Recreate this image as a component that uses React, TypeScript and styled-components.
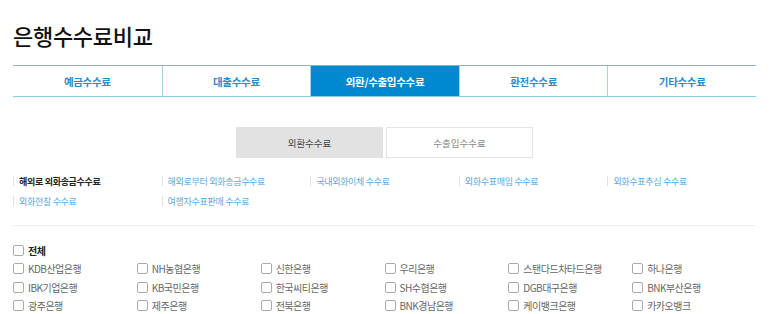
import React from "react";
import { useState } from "react";
import styled, { createGlobalStyle } from "styled-components";

const GlobalStyle = createGlobalStyle`
  body {
    margin: 0;
    background: #fff;
    font-family: "Noto Sans CJK KR", "Noto Sans", sans-serif;
  }
`;

const Page = styled.div`
  width: 743px;
  padding: 0 17px 0 13px;
`;

const Title = styled.h1`
  margin: 0;
  padding-top: 22px;
  height: 65px;
  box-sizing: border-box;
  font-size: 22px;
  line-height: 26px;
  font-weight: 500;
  color: #111;
  letter-spacing: -0.3px;
`;

const TabBar = styled.div`
  display: grid;
  grid-template-columns: repeat(5, 1fr);
  border-top: 1px solid #98afc6;
  border-bottom: 1px solid #8ecbeb;
  height: 30px;
`;

const Tab = styled.div<{ $active?: boolean }>`
  display: flex;
  align-items: center;
  justify-content: center;
  font-size: 10.5px;
  font-weight: 700;
  letter-spacing: -0.3px;
  color: ${(p) => (p.$active ? "#fff" : "#2a8bcc")};
  background: ${(p) => (p.$active ? "#0088d0" : "transparent")};
  & + & {
    border-left: 1px solid #a6d2ec;
  }
`;

const SubTabs = styled.div`
  display: flex;
  justify-content: center;
  gap: 3px;
  margin-top: 30px;
`;

const SubTab = styled.div<{ $active?: boolean }>`
  width: 147px;
  height: 31px;
  box-sizing: border-box;
  display: flex;
  align-items: center;
  justify-content: center;
  font-size: 9.5px;
  color: ${(p) => (p.$active ? "#444" : "#888")};
  background: ${(p) => (p.$active ? "#e2e2e2" : "#fff")};
  border: 1px solid ${(p) => (p.$active ? "#e2e2e2" : "#e4e4e4")};
`;

const LinkGrid = styled.div`
  display: grid;
  grid-template-columns: repeat(5, 1fr);
  margin-top: 13px;
  padding-bottom: 14px;
  border-bottom: 1px solid #eee;
`;

const LinkItem = styled.div<{ $current?: boolean }>`
  height: 20px;
  display: flex;
  align-items: center;
  font-size: 9px;
  letter-spacing: -0.3px;
  color: ${(p) => (p.$current ? "#222" : "#5ba9dd")};
  font-weight: ${(p) => (p.$current ? 700 : 400)};
  &::before {
    content: "";
    width: 1px;
    height: 10px;
    background: #e2e2e2;
    margin-right: 5px;
  }
`;

const BankGrid = styled.div`
  display: grid;
  grid-template-columns: repeat(6, 1fr);
  margin-top: 15px;
`;

const Check = styled.label<{ $bold?: boolean }>`
  height: 18.5px;
  display: flex;
  align-items: center;
  gap: 4px;
  font-size: 10px;
  letter-spacing: -0.5px;
  color: ${(p) => (p.$bold ? "#222" : "#666")};
  font-weight: ${(p) => (p.$bold ? 700 : 400)};
  grid-column: ${(p) => (p.$bold ? "1 / -1" : "auto")};
`;

const Box = styled.span<{ $on?: boolean }>`
  width: 11px;
  height: 11px;
  box-sizing: border-box;
  border: 1px solid #a9a9a9;
  border-radius: 2px;
  background: ${(p) => (p.$on ? "#0088d0" : "#fff")};
`;

const tabs = ["예금수수료", "대출수수료", "외환/수출입수수료", "환전수수료", "기타수수료"];
const links = [
  "해외로 외화송금수수료",
  "해외로부터 외화송금수수료",
  "국내외화이체 수수료",
  "외화수표매입 수수료",
  "외화수표추심 수수료",
  "외화현찰 수수료",
  "여행자수표판매 수수료",
];
const banks = [
  "KDB산업은행", "NH농협은행", "신한은행", "우리은행", "스탠다드차타드은행", "하나은행",
  "IBK기업은행", "KB국민은행", "한국씨티은행", "SH수협은행", "DGB대구은행", "BNK부산은행",
  "광주은행", "제주은행", "전북은행", "BNK경남은행", "케이뱅크은행", "카카오뱅크",
];

const App = () => {
  const [checked, setChecked] = useState<string[]>([]);
  const toggle = (name: string) =>
    setChecked((c) => (c.includes(name) ? c.filter((n) => n !== name) : [...c, name]));

  return (
    <Page>
      <GlobalStyle />
      <Title>은행수수료비교</Title>
      <TabBar>
        {tabs.map((t, i) => (
          <Tab key={t} $active={i === 2}>
            {t}
          </Tab>
        ))}
      </TabBar>
      <SubTabs>
        <SubTab $active>외환수수료</SubTab>
        <SubTab>수출입수수료</SubTab>
      </SubTabs>
      <LinkGrid>
        {links.map((l, i) => (
          <LinkItem key={l} $current={i === 0}>
            {l}
          </LinkItem>
        ))}
      </LinkGrid>
      <BankGrid>
        <Check $bold onClick={() => toggle("전체")}>
          <Box $on={checked.includes("전체")} />
          전체
        </Check>
        {banks.map((b) => (
          <Check key={b} onClick={() => toggle(b)}>
            <Box $on={checked.includes(b)} />
            {b}
          </Check>
        ))}
      </BankGrid>
    </Page>
  );
};

export default App;
